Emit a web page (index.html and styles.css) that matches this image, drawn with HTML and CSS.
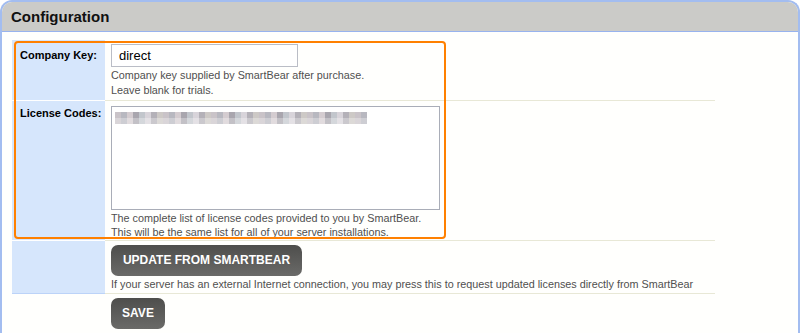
FILE: index.html
```html
<!DOCTYPE html>
<html lang="en">
<head>
    <meta charset="UTF-8">
    <title>Configuration</title>
    <link rel="stylesheet" href="styles.css">
</head>
<body>

<div class="panel">
    <div class="panel-header">Configuration</div>

    <div class="panel-body">
        <!-- highlight around the license fields -->
        <div class="highlight"></div>

        <table class="config">
            <tr class="row-key">
                <td class="label">Company Key:</td>
                <td class="value">
                    <input type="text" class="text-input" value="direct">
                    <div class="help">Company key supplied by SmartBear after purchase.<br>Leave blank for trials.</div>
                </td>
            </tr>
            <tr class="row-codes">
                <td class="label">License Codes:</td>
                <td class="value">
                    <div class="codes">
                        <div class="mosaic m1"></div>
                        <div class="mosaic m2"></div>
                    </div>
                    <div class="help">The complete list of license codes provided to you by SmartBear.<br>This will be the same list for all of your server installations.</div>
                </td>
            </tr>
            <tr class="row-update">
                <td class="label"></td>
                <td class="value">
                    <button class="btn btn-update">UPDATE FROM SMARTBEAR</button>
                    <div class="help">If your server has an external Internet connection, you may press this to request updated licenses directly from SmartBear</div>
                </td>
            </tr>
            <tr class="row-save">
                <td class="label blank"></td>
                <td class="value">
                    <button class="btn btn-save">SAVE</button>
                </td>
            </tr>
        </table>
    </div>
</div>

</body>
</html>
```

FILE: styles.css
```css
:root {
    --panel-border: #a3bdf0;
    --header-grey: #cbcbc8;
    --label-blue: #d6e6fc;
    --row-line: #e8e8d6;
    --orange: #ff8000;
    --help-text: #4f4f4f;
}

body {
    margin: 0;
    background-color: #ffffff;
    font-family: Tahoma, "Liberation Sans", Arial, sans-serif;
}

.panel {
    height: 331px;
    border: 2px solid var(--panel-border);
    border-bottom: none;
    border-radius: 12px 12px 0 0;
    background-color: #fffffd;
    overflow: hidden;
}

.panel-header {
    height: 29px;
    line-height: 29px;
    padding-left: 9px;
    background-color: var(--header-grey);
    border-bottom: 1px solid #98b3ee;
    font-size: 15px;
    font-weight: bold;
    color: #111111;
}

.panel-body {
    position: relative;
    padding: 8px 0 0 10px;
}

.highlight {
    position: absolute;
    left: 12px;
    top: 9px;
    width: 428px;
    height: 194px;
    border: 2px solid var(--orange);
    border-radius: 4px;
    pointer-events: none;
}

.config {
    width: 703px;
    border-collapse: collapse;
}

.config td {
    vertical-align: top;
    padding: 0;
    border-bottom: 1px solid var(--row-line);
}

.label {
    width: 85px;
    padding: 9px 0 0 8px !important;
    background-color: var(--label-blue);
    font-size: 11px;
    font-weight: bold;
    color: #000000;
    border-bottom-color: #ffffff !important;
}

.row-codes .label {
    padding-top: 6px !important;
}

.row-update .label {
    border-bottom-color: #bcd3f8 !important;
}

.label.blank {
    background-color: transparent;
    border-bottom-color: var(--row-line) !important;
}

.value {
    padding: 4px 0 0 6px !important;
}

.row-key {
    height: 60px;
}

.row-codes {
    height: 138px;
}

.row-update {
    height: 53px;
}

.row-save {
    height: 40px;
}

.text-input {
    display: block;
    box-sizing: border-box;
    width: 187px;
    height: 23px;
    margin: 0;
    padding: 0 7px;
    border: 1px solid #babdc6;
    background-color: #ffffff;
    font-family: Tahoma, "Liberation Sans", Arial, sans-serif;
    font-size: 13px;
    color: #000000;
}

.help {
    margin-top: 1px;
    font-size: 10.8px;
    line-height: 14.5px;
    color: var(--help-text);
}

.codes {
    position: relative;
    box-sizing: border-box;
    width: 329px;
    height: 104px;
    margin-top: 1px;
    border: 1px solid #a9adb8;
    background-color: #ffffff;
}

.mosaic {
    position: absolute;
    left: 3px;
    width: 252px;
    height: 6px;
    background-image: repeating-linear-gradient(90deg,
        #c9c3c8 0 6px, #b8b8c0 6px 12px, #d4ccd0 12px 18px, #a9a6ae 18px 24px,
        #c2c6cc 24px 30px, #d8d4da 30px 36px, #b4b1b8 36px 42px, #cdc9c6 42px 48px);
}

.m1 {
    top: 5px;
}

.m2 {
    top: 11px;
    opacity: 0.7;
}

.btn {
    display: block;
    height: 31px;
    margin: 0;
    padding: 0 11px;
    border: none;
    border-radius: 7px;
    background: linear-gradient(#4e4e4c, #6a6a68);
    color: #ffffff;
    font-family: Tahoma, "Liberation Sans", Arial, sans-serif;
    font-size: 12px;
    font-weight: bold;
    cursor: pointer;
}

.btn-update {
    width: 191px;
}

.btn-save {
    width: 54px;
    padding: 0;
}
```
